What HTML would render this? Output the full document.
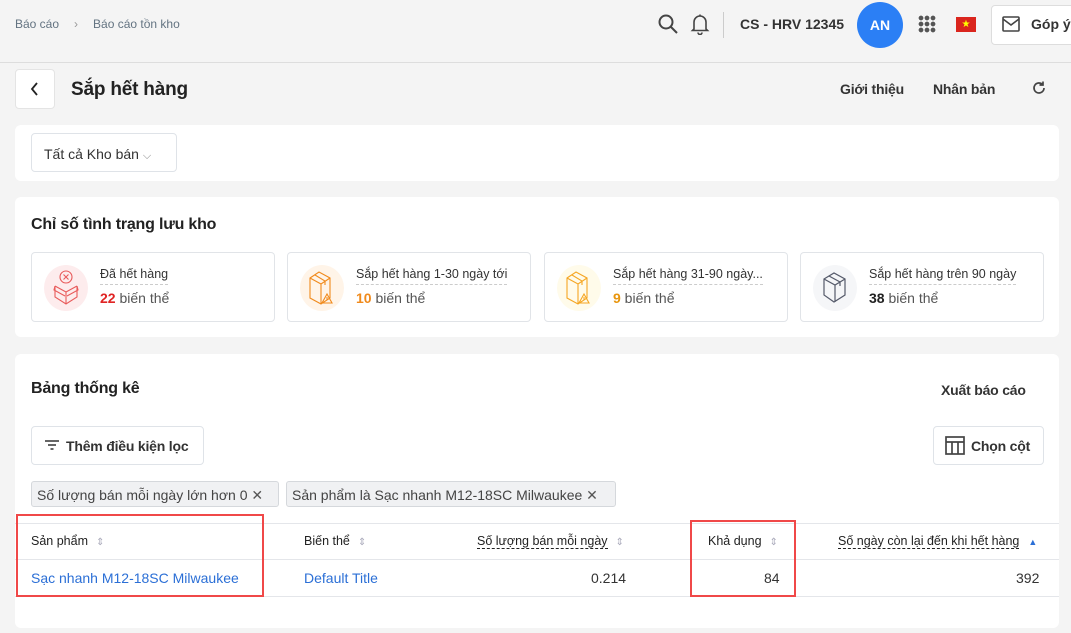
<!DOCTYPE html>
<html><head><meta charset="utf-8"><style>
*{box-sizing:border-box;margin:0;padding:0}
body{width:1071px;height:633px;overflow:hidden;background:#f4f4f4;font-family:"Liberation Sans",sans-serif;color:#212b36;position:relative;font-size:14px}
.a{position:absolute}
.card{position:absolute;background:#fff;border-radius:6px;left:15px;width:1044px}
.box{position:absolute;border:1px solid #dfe3e8;border-radius:4px;background:#fff}
.stat{position:absolute;top:55px;width:244px;height:70px;border:1px solid #e1e4e8;border-radius:4px}
.ic{position:absolute;left:12px;top:12px;width:44px;height:46px;border-radius:50%}
.lb{position:absolute;left:68px;top:14px;font-size:12.5px;color:#333;border-bottom:1px dashed #ccc;padding-bottom:3px}
.vl{position:absolute;left:68px;top:37px;font-size:14px;color:#555}
.vl b{font-weight:bold}
.chip{position:absolute;top:481px;height:26px;background:#f0f1f3;border:1px solid #d5d8dc;border-radius:3px;font-size:14px;color:#444;padding:5px 5px 0 5px;white-space:nowrap}
.th{position:absolute;top:534px;font-size:12.5px;color:#222;white-space:nowrap}
.dash{border-bottom:1px dashed #222}
.srt{color:#aab;font-size:10px;margin-left:8px}
.red{position:absolute;border:2px solid #f04848}
.sb{font-weight:bold;color:#333;letter-spacing:-0.2px}
</style></head><body>
<div class="a" style="left:15px;top:17px;font-size:12px"><span style="color:#637381">Báo cáo</span><span style="color:#999;margin:0 15px">›</span><span style="color:#637381">Báo cáo tồn kho</span></div>
<svg class="a" style="left:657px;top:13px" width="22" height="22" viewBox="0 0 22 22" fill="none" stroke="#444" stroke-width="2"><circle cx="9" cy="9" r="6.5"/><path d="M14 14l6 6"/></svg>
<svg class="a" style="left:690px;top:13px" width="20" height="22" viewBox="0 0 20 22" fill="none" stroke="#444" stroke-width="1.6"><path d="M4 16V9a6 6 0 0112 0v7l1.5 1.5h-15zM8 19.5a2 2 0 004 0M10 1.5v1.5"/></svg>
<div class="a" style="left:723px;top:12px;width:1px;height:26px;background:#ccc"></div>
<div class="a" style="left:740px;top:16px;font-weight:bold;font-size:14px;color:#333">CS - HRV 12345</div>
<div class="a" style="left:857px;top:2px;width:46px;height:46px;border-radius:50%;background:#2b7ff5;color:#fff;font-weight:bold;text-align:center;line-height:46px;font-size:14px">AN</div>
<div class="a" style="left:918px;top:15px;width:18px;height:18px;background:radial-gradient(circle,#555 2.2px,transparent 2.5px) 0 0/6px 6px"></div>
<div class="a" style="left:956px;top:17px;width:20px;height:15px;background:#da251d;color:#ff0;font-size:10px;text-align:center;line-height:15px">★</div>
<div class="a" style="left:991px;top:5px;width:90px;height:40px;background:#fff;border:1px solid #ddd;border-radius:4px"></div>
<svg class="a" style="left:1002px;top:16px" width="18" height="16" viewBox="0 0 18 16" fill="none" stroke="#444" stroke-width="1.6"><rect x="1" y="1" width="16" height="14" rx="1"/><path d="M1 3l8 6 8-6"/></svg>
<div class="a" style="left:1031px;top:16px;font-weight:bold;font-size:14px;color:#333">Góp ý</div>
<div class="a" style="left:0;top:62px;width:1071px;height:1px;background:#ddd"></div>
<div class="box" style="left:15px;top:69px;width:40px;height:40px;border-color:#e4e4e4"></div>
<svg class="a" style="left:29px;top:82px" width="12" height="14" viewBox="0 0 12 14" fill="none" stroke="#222" stroke-width="1.8"><path d="M8 1L3 7l5 6"/></svg>
<div class="a sb" style="left:71px;top:79px;font-size:19px;color:#222">Sắp hết hàng</div>
<div class="a sb" style="left:840px;top:81px;font-size:14px">Giới thiệu</div>
<div class="a sb" style="left:933px;top:81px;font-size:14px">Nhân bản</div>
<svg class="a" style="left:1031px;top:80px" width="16" height="16" viewBox="0 0 16 16" fill="none" stroke="#444" stroke-width="1.7"><path d="M13 8a5 5 0 11-1.5-3.6M12 1.5v3.5H8.5"/></svg>

<div class="card" style="top:125px;height:56px">
<div class="box" style="left:16px;top:8px;width:146px;height:39px;padding:12px 0 0 12px;font-size:14px;color:#333">Tất cả Kho bán <span style="color:#888;font-size:11px">⌵</span></div>
</div>

<div class="card" style="top:197px;height:140px">
<div class="a sb" style="left:16px;top:19px;font-size:16px;color:#222">Chỉ số tình trạng lưu kho</div>
<div class="stat" style="left:16px"><div class="ic" style="background:#fdeced"></div>
<svg class="a" style="left:21px;top:16px" width="26" height="38" viewBox="0 0 26 38" fill="none" stroke="#e85a5a" stroke-width="1.1"><circle cx="13" cy="8" r="6"/><path d="M10.5 5.5l5 5M15.5 5.5l-5 5M2 17l11 6 11-6M2 17v11l11 7 11-7V17M13 23v12M2 17l-1 4 11 6M24 17l1 4-11 6"/></svg>
<div class="lb">Đã hết hàng</div><div class="vl"><b style="color:#e02424">22</b> biến thể</div></div>
<div class="stat" style="left:272px"><div class="ic" style="background:#fff4e8"></div>
<svg class="a" style="left:19px;top:16px" width="30" height="40" viewBox="0 0 30 40" fill="none" stroke="#f08a1c" stroke-width="1.1"><path d="M3 9l9-6 11 6v20l-9 6-11-6zM3 9l11 6 9-6M14 15v20M8 6l10 6v4M20 25l5 9h-10zM20 28v3"/></svg>
<div class="lb">Sắp hết hàng 1-30 ngày tới</div><div class="vl"><b style="color:#f08a1c">10</b> biến thể</div></div>
<div class="stat" style="left:529px"><div class="ic" style="background:#fffbea"></div>
<svg class="a" style="left:19px;top:16px" width="30" height="40" viewBox="0 0 30 40" fill="none" stroke="#f5a623" stroke-width="1.1"><path d="M3 9l9-6 11 6v20l-9 6-11-6zM3 9l11 6 9-6M14 15v20M8 6l10 6v4M20 25l5 9h-10zM20 28v3"/></svg>
<div class="lb">Sắp hết hàng 31-90 ngày...</div><div class="vl"><b style="color:#e8950c">9</b> biến thể</div></div>
<div class="stat" style="left:785px"><div class="ic" style="background:#f5f6f8"></div>
<svg class="a" style="left:20px;top:18px" width="28" height="34" viewBox="0 0 28 34" fill="none" stroke="#555a6a" stroke-width="1.2"><path d="M3 8l10-6 11 6v16l-11 7-10-7zM3 8l11 6 10-6M14 14v17M8 5l11 6v4"/></svg>
<div class="lb">Sắp hết hàng trên 90 ngày</div><div class="vl"><b style="color:#222">38</b> biến thể</div></div>
</div>

<div class="card" style="top:354px;height:274px"></div>
<div class="a sb" style="left:31px;top:380px;font-size:16px;color:#222">Bảng thống kê</div>
<div class="a sb" style="left:941px;top:382px;font-size:14px">Xuất báo cáo</div>
<div class="box" style="left:31px;top:426px;width:173px;height:39px"></div>
<svg class="a" style="left:44px;top:439px" width="16" height="12" viewBox="0 0 16 12" stroke="#333" stroke-width="1.6"><path d="M1 2h14M4 6h8M6.5 10h3"/></svg>
<div class="a sb" style="left:66px;top:438px;font-size:14px">Thêm điều kiện lọc</div>
<div class="box" style="left:933px;top:426px;width:111px;height:39px"></div>
<svg class="a" style="left:945px;top:436px" width="20" height="19" viewBox="0 0 20 19" fill="none" stroke="#444" stroke-width="1.7"><rect x="1" y="1" width="18" height="17"/><path d="M1 6h18M7 6v12M13 6v12"/></svg>
<div class="a sb" style="left:971px;top:438px;font-size:14px">Chọn cột</div>
<div class="chip" style="left:31px;width:248px">Số lượng bán mỗi ngày lớn hơn 0 <span style="color:#555">✕</span></div>
<div class="chip" style="left:286px;width:330px">Sản phẩm là Sạc nhanh M12-18SC Milwaukee <span style="color:#555">✕</span></div>
<div class="a" style="left:15px;top:523px;width:1044px;height:1px;background:#e4e6ea"></div>
<div class="a" style="left:15px;top:559px;width:1044px;height:1px;background:#e4e6ea"></div>
<div class="a" style="left:15px;top:596px;width:1044px;height:1px;background:#e4e6ea"></div>
<div class="th" style="left:31px">Sản phẩm<span class="srt">⇕</span></div>
<div class="th" style="left:304px">Biến thể<span class="srt">⇕</span></div>
<div class="th" style="left:477px"><span class="dash">Số lượng bán mỗi ngày</span><span class="srt">⇕</span></div>
<div class="th" style="left:708px">Khả dụng<span class="srt">⇕</span></div>
<div class="th" style="left:838px"><span class="dash">Số ngày còn lại đến khi hết hàng</span><span style="color:#2b6fd6;font-size:9px;margin-left:9px">▲</span></div>
<div class="a" style="left:31px;top:570px;font-size:14px;color:#2b6fd6">Sạc nhanh M12-18SC Milwaukee</div>
<div class="a" style="left:304px;top:570px;font-size:14px;color:#2b6fd6">Default Title</div>
<div class="a" style="left:591px;top:570px;font-size:14px;color:#333">0.214</div>
<div class="a" style="left:764px;top:570px;font-size:14px;color:#333">84</div>
<div class="a" style="left:1016px;top:570px;font-size:14px;color:#333">392</div>
<div class="red" style="left:16px;top:514px;width:248px;height:83px"></div>
<div class="red" style="left:690px;top:520px;width:106px;height:77px"></div>
</body></html>
